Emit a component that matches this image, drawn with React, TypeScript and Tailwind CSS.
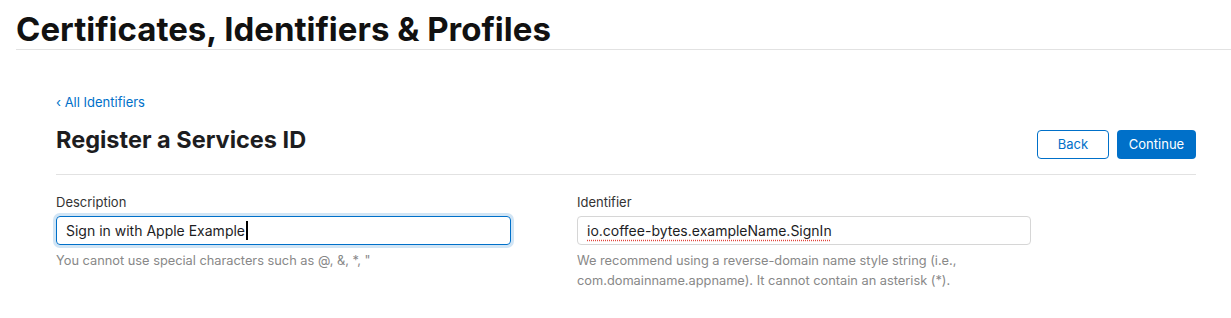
import React from "react";

const font = { fontFamily: "Inter, 'Liberation Sans', sans-serif" };

function Field({
  label,
  value,
  focused,
  spell,
  help,
}: {
  label: string;
  value: string;
  focused?: boolean;
  spell?: boolean;
  help: React.ReactNode;
}) {
  return (
    <div className="flex flex-col">
      <span className="text-[13px] leading-[16px] text-[#333]">{label}</span>
      <div
        className={
          focused
            ? "mt-[6px] flex h-[29px] w-[455px] items-center rounded-[4px] border border-[#0070c9] pl-[9px] shadow-[0_0_0_3px_rgba(0,113,201,0.18)]"
            : "mt-[6px] flex h-[29px] w-[454px] items-center rounded-[4px] border border-[#d6d6d6] pl-[9px]"
        }
      >
        <span
          className={
            spell
              ? "text-[14px] text-[#1d1d1f] underline decoration-dotted decoration-[#e0433b] underline-offset-[4px]"
              : "text-[14px] text-[#1d1d1f]"
          }
        >
          {value}
        </span>
        {focused && <span className="ml-[1px] h-[19px] w-[2px] bg-black" />}
      </div>
      <p className="mt-[6px] text-[12.8px] leading-[20px] text-[#888]">{help}</p>
    </div>
  );
}

export default function App() {
  return (
    <div className="h-[318px] w-[1231px] bg-white" style={font}>
      <div className="pl-[16px] pt-[10px]">
        <h1 className="text-[33px] font-bold leading-[38px] text-[#111]">
          Certificates, Identifiers &amp; Profiles
        </h1>
        <div className="mt-[1px] h-px bg-[#e2e2e2]" />
      </div>

      <div className="ml-[56px] w-[1140px]">
        <a className="mt-[44px] block text-[13px] leading-[16px] text-[#0070c9]">
          ‹ All Identifiers
        </a>
        <div className="mt-[7px] flex items-center justify-between">
          <h2 className="pt-[4px] text-[23.5px] font-bold leading-[28px] text-[#1d1d1f]">
            Register a Services ID
          </h2>
          <div className="flex gap-[8px] pt-[13px]">
            <button className="h-[29px] w-[72px] rounded-[4px] border border-[#0070c9] text-[13px] text-[#0070c9]">
              Back
            </button>
            <button className="h-[29px] w-[79px] rounded-[4px] bg-[#0070c9] text-[13px] text-white">
              Continue
            </button>
          </div>
        </div>
        <div className="mt-[15px] h-px bg-[#e2e2e2]" />

        <div className="mt-[19px] grid grid-cols-[521px_1fr]">
          <Field
            label="Description"
            value="Sign in with Apple Example"
            focused
            help={'You cannot use special characters such as @, &, *, "'}
          />
          <Field
            label="Identifier"
            value="io.coffee-bytes.exampleName.SignIn"
            spell
            help={
              <>
                We recommend using a reverse-domain name style string (i.e.,
                <br />
                com.domainname.appname). It cannot contain an asterisk (*).
              </>
            }
          />
        </div>
      </div>
    </div>
  );
}
